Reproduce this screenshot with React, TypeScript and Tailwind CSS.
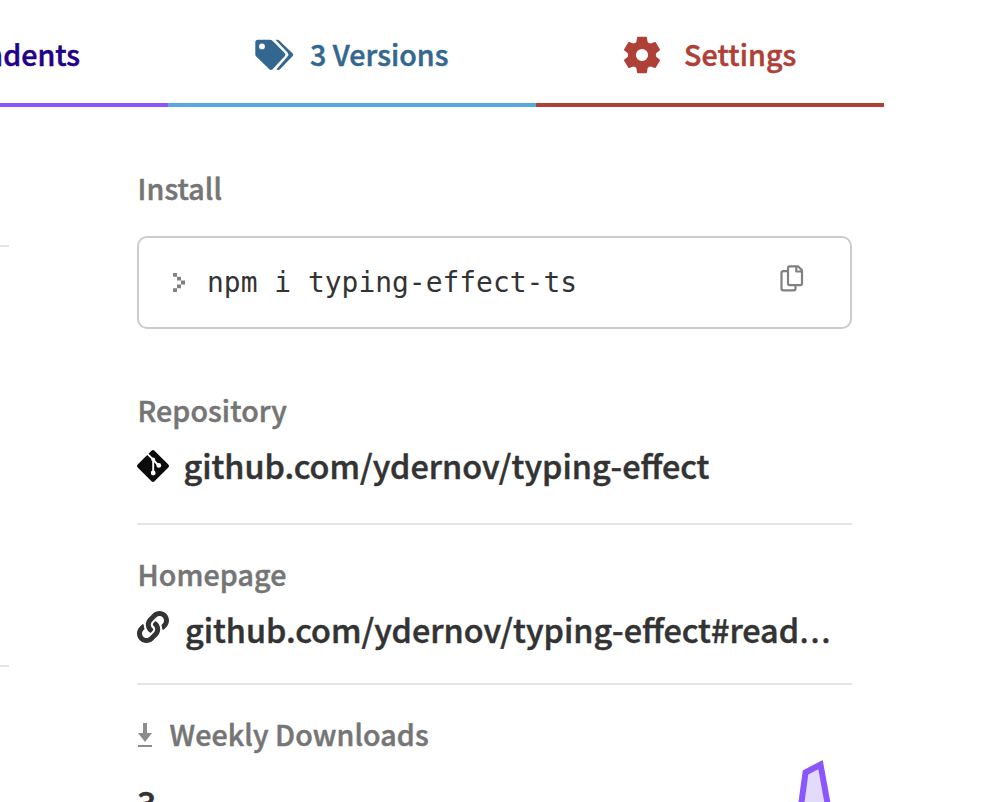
import React from "react";
import { FaLink } from "react-icons/fa";

const SANS = "font-['Noto_Sans_CJK_SC',sans-serif]";

function TagsIcon() {
  return (
    <svg width="40" height="32" viewBox="0 0 40 32" fill="#33678f" className="mb-[2px] shrink-0">
      <path fillRule="evenodd" d="M3 .8h11.800q1.700 0 2.900 1.200l12 11.900q1.600 1.700 0 3.400L17.600 30.300q-1.600 1.500-3.200 0L1.200 17.600Q.3 16.600.3 15.200V3.500Q.3.8 3 .8ZM7 4.500a2.900 2.900 0 1 0 0 5.800a2.900 2.900 0 0 0 0-5.800Z" />
      <path d="M20.500.800h1.800q1.100 0 1.900.8l13.500 13q1.200 1.200 0 2.400L25 30.200q-1 1-2.600.8L21.500 30.300 32.500 17.600q1.800-2 0-4Z" />
    </svg>
  );
}

function GearIcon() {
  return (
    <svg width="38" height="38" viewBox="-19 -19 38 38" fill="#ae4037" className="mb-[2px] shrink-0">
      <circle r="9.900" fill="none" stroke="#ae4037" strokeWidth="7.600" />
      {[0, 60, 120, 180, 240, 300].map((angle) => (
        <path key={angle} transform={`rotate(${angle})`} d="M-4-18.300H4q.8 0 .9.800l.7 4.300L8-10H-8l2.400-3.200.7-4.300q.1-.8.900-.8Z" />
      ))}
    </svg>
  );
}

function CopyIcon() {
  return (
    <svg width="24" height="27" viewBox="0 0 24 27" fill="none" stroke="#808080" strokeWidth="2.200" strokeLinejoin="round">
      <path d="M7 6.200H3.300Q1.500 6.200 1.500 8v15.500q0 1.800 1.800 1.800h10.500q1.700 0 1.700-1.800V21" />
      <path d="M9.700 1.300h8.300l4 4v13.200q0 1.700-1.700 1.700H9.700Q8 20.200 8 18.500V3Q8 1.300 9.700 1.300ZM16.300 1.300v5.200h5.700" />
    </svg>
  );
}

function GitIcon() {
  return (
    <svg width="32" height="32" viewBox="0 0 32 32" className="mt-[2px] shrink-0">
      <path fill="#0b0b0b" d="M14.500.7q1.500-1.400 3 0l13.800 13.800q1.400 1.500 0 3L17.500 31.300q-1.500 1.400-3 0L.7 17.500q-1.400-1.500 0-3Z" />
      <g stroke="#fff" strokeWidth="1.900" fill="#fff">
        <path d="M10.200 3.700l6 6V23M16.200 9.700l5.300 5.800" fill="none" />
        <circle cx="16.200" cy="9.500" r="1.900" stroke="none" />
        <circle cx="16.200" cy="23" r="2.400" stroke="none" />
        <circle cx="21.800" cy="15.400" r="2.400" stroke="none" />
      </g>
    </svg>
  );
}

function Heading({ children }: { children: React.ReactNode }) {
  return (
    <h3 className="h-10 whitespace-nowrap pl-[0.500px] text-[28.600px] font-medium leading-[37px] tracking-[0.1px] text-[#757575] [-webkit-text-stroke:0.5px_#757575]">
      {children}
    </h3>
  );
}

const LINK = "whitespace-nowrap text-[32.360px] font-medium leading-10 [-webkit-text-stroke:0.5px_#333]";

export default function App() {
  return (
    <div className={`${SANS} h-[802px] w-[998px] overflow-hidden bg-white text-[#333]`}>
      <nav className="flex h-[107px] text-[28.600px] font-medium leading-10 [-webkit-text-stroke:0.5px_currentColor]">
        <div className="flex w-[168px] items-center justify-end border-b-4 border-[#8956ff] pr-[88px] pt-2 text-[#220087]">
          <span className="mb-1 whitespace-nowrap">Dependents</span>
        </div>
        <div className="flex w-[368px] items-center border-b-4 border-[#56a9de] pl-[87px] pt-2 text-[#33678f]">
          <TagsIcon />
          <span className="mb-1 ml-[15px] whitespace-nowrap tracking-[0.05px]">3 Versions</span>
        </div>
        <div className="flex w-[348px] items-center border-b-4 border-[#ae4037] pl-[87px] pt-2 text-[#ae4037]">
          <GearIcon />
          <span className="mb-1 ml-[23px] whitespace-nowrap tracking-[0.1px]">Settings</span>
        </div>
      </nav>
      <div className="flex">
        <aside className="w-[9px] pt-[138px]">
          <div className="h-[2px] bg-[#e5e5e5]" />
          <div className="mt-[418px] h-[2px] bg-[#e5e5e5]" />
        </aside>
        <main className="ml-32 w-[715px] pt-[62px]">
          <Heading>Install</Heading>
          <div className="mt-[27px] flex h-[93px] items-center rounded-[10px] border-2 border-[#ccc] pl-[34px] pr-[46px]">
            <svg width="12" height="19" viewBox="0 0 12 20" preserveAspectRatio="none" fill="#808080">
              <path d="M0 0h4v4H0zM4 4h4v4H4zM8 8h4v4H8zM4 12h4v4H4zM0 16h4v4H0z" />
            </svg>
            <code className="ml-[22px] whitespace-pre font-['DejaVu_Sans_Mono',monospace] text-[27.950px] leading-10">npm i typing-effect-ts</code>
            <div className="mb-2 ml-auto"><CopyIcon /></div>
          </div>
          <section className="mt-[62px] h-[134px] border-b-2 border-[#e5e5e5]">
            <Heading>Repository</Heading>
            <div className="mt-[14px] flex h-10 items-center">
              <GitIcon />
              <span className={`${LINK} ml-[14.500px]`}>github.com/ydernov/typing-effect</span>
            </div>
          </section>
          <section className="mt-[30px] h-[130px] border-b-2 border-[#e5e5e5]">
            <Heading>Homepage</Heading>
            <div className="mt-[14px] flex h-10 items-center">
              <FaLink size={32} className="mb-1 shrink-0" />
              <span className={`${LINK} ml-4`}>
                github.com/ydernov/typing-effect#read<span className="text-[29px]">…</span>
              </span>
            </div>
          </section>
          <section className="mt-[30px]">
            <div className="flex items-center">
              <svg width="16" height="25" viewBox="0 0 16 25" fill="#8c8c8c">
                <path d="M6 0h4v10h5L8 19 1 10h5zM1 22h14v2H1z" />
              </svg>
              <div className="ml-4"><Heading>Weekly Downloads</Heading></div>
            </div>
            <div className="flex justify-between">
              <p className="mt-[27px] h-5 text-[34px] font-medium leading-[40px] [-webkit-text-stroke:0.5px_#333]">3</p>
              <svg width="60" height="47" viewBox="0 0 60 47">
                <path d="M7.500 62 13.500 17.500 28.500 9.500 38 62" fill="#e3dbfb" stroke="#8956ff" strokeWidth="6" />
              </svg>
            </div>
          </section>
        </main>
      </div>
    </div>
  );
}
